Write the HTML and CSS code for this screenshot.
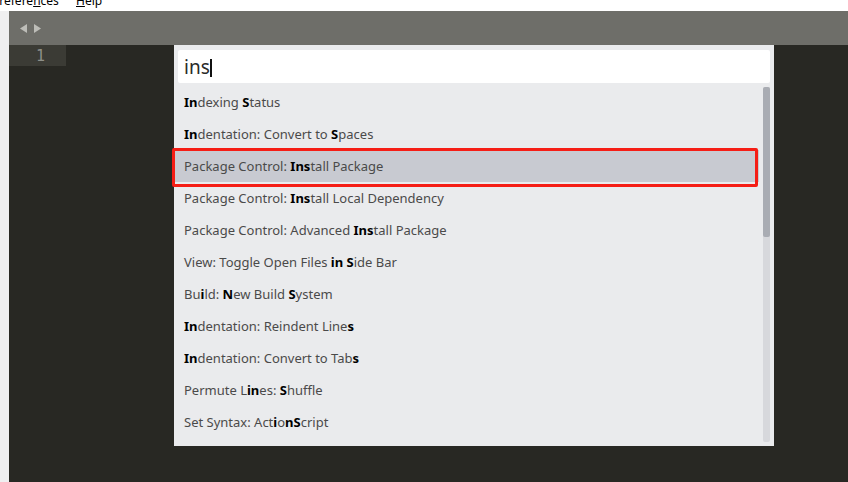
FILE: index.html
```html
<!DOCTYPE html>
<html>
<head>
<meta charset="utf-8">
<link rel="stylesheet" href="styles.css">
</head>
<body>
<div class="menubar">
  <span class="menu">Prefere<u>n</u>ces</span>
  <span class="menu"><u>H</u>elp</span>
</div>
<div class="app">
  <div class="leftstrip"></div>
  <div class="window">
    <div class="tabbar">
      <svg class="arrows" width="22" height="10" viewBox="0 0 22 10">
        <polygon points="7,0 7,9 0,4.5" fill="#bdbdb8"/>
        <polygon points="14,0 14,9 21,4.5" fill="#bdbdb8"/>
      </svg>
    </div>
    <div class="editor">
      <div class="gutterline"><span class="ln">1</span></div>
    </div>
    <div class="palette">
      <div class="input"><span class="typed">ins</span><span class="caret"></span></div>
      <div class="listwrap">
        <ul class="list">
          <li><b>In</b>dexing <b>S</b>tatus</li>
          <li><b>In</b>dentation: Convert to <b>S</b>paces</li>
          <li class="sel">Package Control: <b>Ins</b>tall Package</li>
          <li>Package Control: <b>Ins</b>tall Local Dependency</li>
          <li>Package Control: Advanced <b>Ins</b>tall Package</li>
          <li>View: Toggle Open Files <b>in S</b>ide Bar</li>
          <li>Bu<b>i</b>ld: <b>N</b>ew Build <b>S</b>ystem</li>
          <li><b>In</b>dentation: Reindent Line<b>s</b></li>
          <li><b>In</b>dentation: Convert to Tab<b>s</b></li>
          <li>Permute L<b>in</b>es: <b>S</b>huffle</li>
          <li>Set Syntax: Act<b>i</b>o<b>nS</b>cript</li>
        </ul>
        <div class="scrollbar"><div class="thumb"></div></div>
      </div>
      <div class="redbox"></div>
    </div>
  </div>
</div>
</body>
</html>
```

FILE: styles.css
```css
html, body {
  margin: 0;
  padding: 0;
  width: 848px;
  height: 482px;
  overflow: hidden;
  background: #f0f0f0;
}
.menubar {
  height: 11px;
  background: #ffffff;
  overflow: hidden;
  display: flex;
  font-family: "Noto Sans", sans-serif;
  font-size: 12px;
  color: #000;
}
.menu {
  margin-top: -7px;
  line-height: 16px;
}
.menu:first-child {
  margin-left: -8px;
  width: 84px;
}
.menu u {
  text-decoration-thickness: 1px;
}
.app {
  display: flex;
  height: 471px;
}
.leftstrip {
  width: 9px;
  background: #efeff0;
}
.window {
  flex: 1;
  position: relative;
  display: flex;
  flex-direction: column;
}
.tabbar {
  height: 34px;
  background: #6e6e69;
  display: flex;
  align-items: center;
  padding-left: 11px;
  box-sizing: border-box;
}
.arrows {
  display: block;
  margin-top: 1px;
}
.editor {
  flex: 1;
  background: #282823;
}
.gutterline {
  width: 57px;
  height: 21px;
  background: #3b3b35;
  display: flex;
  justify-content: flex-end;
  align-items: center;
  padding-right: 21px;
  box-sizing: border-box;
}
.ln {
  font-family: "DejaVu Sans Mono", monospace;
  font-size: 15px;
  color: #8e8f89;
}
.palette {
  position: absolute;
  left: 165px;
  top: 34px;
  width: 600px;
  height: 401px;
  background: #eaebed;
  box-sizing: border-box;
  padding: 5px 4px 4px 4px;
  display: flex;
  flex-direction: column;
}
.input {
  height: 33px;
  background: #ffffff;
  border-radius: 2px;
  display: flex;
  align-items: center;
  padding-left: 6px;
  font-family: "Noto Sans", sans-serif;
  font-size: 19px;
  color: #2a2a2a;
}
.typed {
  line-height: 20px;
}
.caret {
  width: 2px;
  height: 18px;
  background: #111;
  margin-top: 2px;
}
.listwrap {
  flex: 1;
  display: flex;
  margin-top: 3px;
}
.list {
  list-style: none;
  margin: 0;
  padding: 0;
  flex: 1;
}
.list li {
  height: 32px;
  line-height: 32px;
  padding-left: 6px;
  font-family: "Noto Sans", sans-serif;
  font-size: 13px;
  color: #4a4a4a;
  white-space: nowrap;
}
.list li b {
  color: #000;
  font-weight: bold;
}
.list li.sel {
  background: #c8cad1;
  margin-right: 4px;
  margin-left: -3px;
  padding-left: 9px;
}
.scrollbar {
  width: 7px;
  background: #d7d8dc;
  border-radius: 2px;
  margin-top: 1px;
}
.thumb {
  height: 150px;
  background: #a9acb3;
  border-radius: 2px;
}
.redbox {
  position: absolute;
  left: -2px;
  top: 103px;
  width: 580px;
  height: 33px;
  border: 3px solid #f51d15;
  border-radius: 2px;
}
```
